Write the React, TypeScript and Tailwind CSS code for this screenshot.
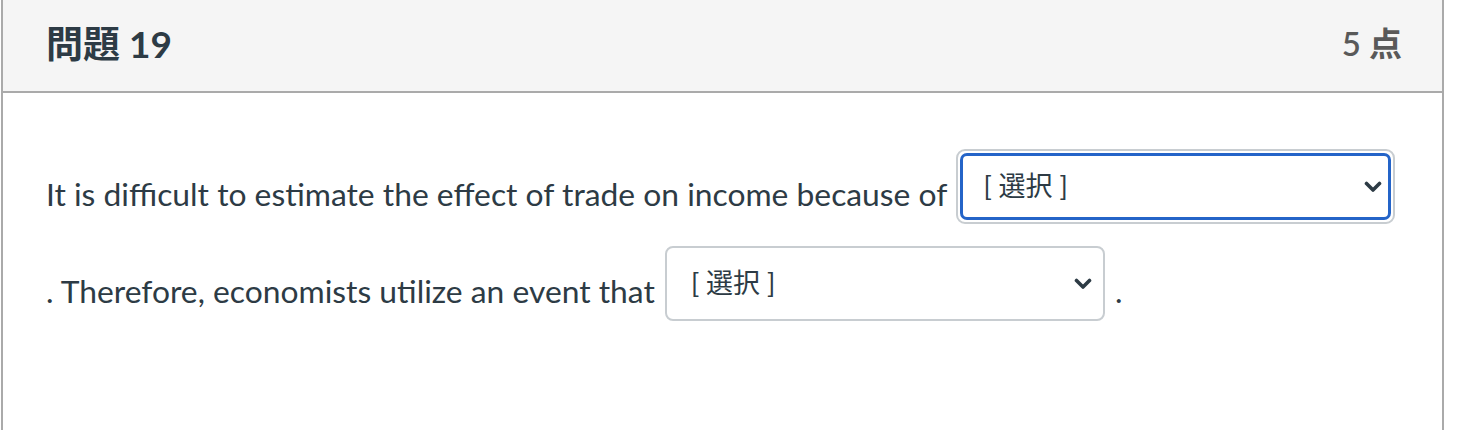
import React from "react";

function Chevron() {
  return (
    <svg width="18" height="12" viewBox="0 0 18 12" className="shrink-0">
      <path d="M2.5 2.5 L9 9 L15.5 2.5" fill="none" stroke="#2d3b45" strokeWidth="3.6" strokeLinecap="round" strokeLinejoin="round" />
    </svg>
  );
}

const sel = { fontFamily: 'Lato, "Noto Sans CJK JP", sans-serif' };

function FakeSelect({ focused }: { focused?: boolean }) {
  if (focused) {
    return (
      <div className="w-[439px] h-[75px] rounded-[9px] border-2 border-[#c8cdd1] p-[2px] shrink-0">
        <div className="w-full h-full rounded-[7px] border-[3px] border-[#2464c8] flex items-center justify-between pl-[20px] pr-[6px]">
          <span className="text-[27px] text-[#2d3b45] pb-[1px]" style={sel}>[ 選択 ]</span>
          <Chevron />
        </div>
      </div>
    );
  }
  return (
    <div className="w-[440px] h-[75px] rounded-[8px] border-2 border-[#c8cdd1] flex items-center justify-between pl-[24px] pr-[11px] shrink-0">
      <span className="text-[27px] text-[#2d3b45] pb-[1px]" style={sel}>[ 選択 ]</span>
      <Chevron />
    </div>
  );
}

export default function App() {
  return (
    <div className="w-[1460px] h-[430px] bg-white overflow-hidden" style={{ fontFamily: 'Lato, "Noto Sans CJK JP", sans-serif' }}>
      <div className="ml-[1px] w-[1443px] h-[440px] border-x-2 border-[#aaaaaa]">
        <div className="h-[93px] bg-[#f5f5f5] border-b-2 border-[#aaaaaa] flex items-center justify-between pl-[43px] pr-[40px] pb-[4px]">
          <h2 className="text-[37px] font-bold text-[#2d3b45]">問題 19</h2>
          <span className="text-[33px] font-semibold text-[#595959]">5 点</span>
        </div>
        <div className="pl-[43px] pt-[56px] text-[31.8px] text-[#2d3b45]">
          <div className="flex items-center gap-[9px]">
            <span className="pt-[16px]">It is difficult to estimate the effect of trade on income because of</span>
            <FakeSelect focused />
          </div>
          <div className="flex items-center gap-[10px] mt-[22px]">
            <span className="pt-[16px]">. Therefore, economists utilize an event that</span>
            <FakeSelect />
            <span className="pt-[16px]">.</span>
          </div>
        </div>
      </div>
    </div>
  );
}
